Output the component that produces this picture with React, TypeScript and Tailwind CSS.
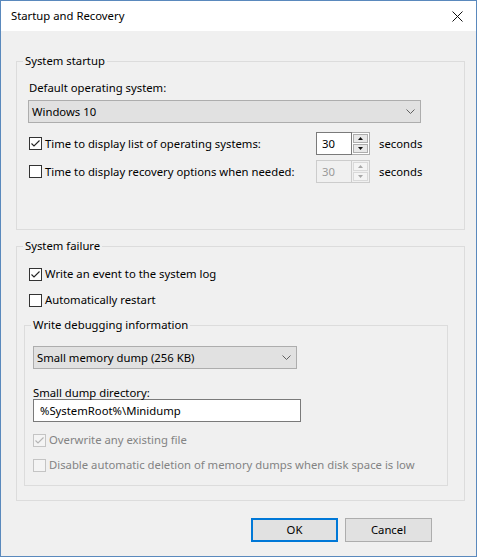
import React from 'react';

type CheckProps = { checked?: boolean; disabled?: boolean };

const Checkbox = ({ checked = false, disabled = false }: CheckProps) => (
  <div
    className={
      disabled
        ? 'w-[13px] h-[13px] shrink-0 border border-[#c4c4c4] bg-[#f4f4f4]'
        : 'w-[13px] h-[13px] shrink-0 border border-[#333333] bg-white'
    }
  >
    {checked && (
      <svg width="11" height="11" viewBox="0 0 11 11" className="block">
        <path
          d="M1.5 5.5 L4 8 L9.5 2.5"
          fill="none"
          stroke={disabled ? '#b4b4b4' : '#222222'}
          strokeWidth="1.1"
        />
      </svg>
    )}
  </div>
);

const Chevron = () => (
  <svg width="9" height="5" viewBox="0 0 9 5" className="block">
    <path d="M0.5 0.5 L4.5 4.5 L8.5 0.5" fill="none" stroke="#606060" strokeWidth="1" />
  </svg>
);

const Triangle = ({ up, color }: { up: boolean; color: string }) => (
  <svg width="5" height="3" viewBox="0 0 5 3" className="block">
    <polygon points={up ? '2.5,0 5,3 0,3' : '0,0 5,0 2.5,3'} fill={color} />
  </svg>
);

const SpinBox = ({ value, disabled = false }: { value: string; disabled?: boolean }) => (
  <div className="flex w-[54px] h-[23px] shrink-0">
    <div
      className={
        disabled
          ? 'w-[36px] h-full border border-[#cccccc] bg-[#f0f0f0] text-[#9a9a9a] pl-[5px] flex items-center'
          : 'w-[36px] h-full border border-[#7a7a7a] bg-white pl-[5px] flex items-center'
      }
    >
      {value}
    </div>
    <div
      className={
        disabled
          ? 'w-[18px] h-full border-y border-r border-[#cccccc] bg-[#f0f0f0] flex flex-col gap-[1px] p-[1px]'
          : 'w-[18px] h-full border-y border-r border-[#adadad] bg-white flex flex-col gap-[1px] p-[1px]'
      }
    >
      <div
        className={
          disabled
            ? 'flex-1 border border-[#d9d9d9] bg-[#f4f4f4] flex items-center justify-center'
            : 'flex-1 border border-[#adadad] bg-[#e8e8e8] flex items-center justify-center'
        }
      >
        <Triangle up color={disabled ? '#a8a8a8' : '#111111'} />
      </div>
      <div
        className={
          disabled
            ? 'flex-1 border border-[#d9d9d9] bg-[#f4f4f4] flex items-center justify-center'
            : 'flex-1 border border-[#adadad] bg-[#e8e8e8] flex items-center justify-center'
        }
      >
        <Triangle up={false} color={disabled ? '#a8a8a8' : '#111111'} />
      </div>
    </div>
  </div>
);

export default function App() {
  return (
    <div className="w-[480px] h-[560px] bg-white">
      <div className="w-[477px] h-[557px] border border-[#5a89bd] bg-[#f0f0f0] flex flex-col text-[11.3px] text-black font-['Noto_Sans',sans-serif] leading-[16px]">
        {/* Title bar */}
        <div className="h-[30px] bg-white flex items-center justify-between pl-[10px] shrink-0">
          <span>Startup and Recovery</span>
          <div className="w-[38px] h-[30px] flex items-center justify-center">
            <svg width="11" height="11" viewBox="0 0 11 11" className="block">
              <path d="M0.5 0.5 L10.5 10.5 M10.5 0.5 L0.5 10.5" stroke="#111111" strokeWidth="1" />
            </svg>
          </div>
        </div>

        {/* System startup */}
        <fieldset className="mt-[22px] ml-[15px] w-[449px] h-[177px] border border-[#dcdcdc] shrink-0">
          <legend className="ml-[6px] px-[2px] leading-[16px]">System startup</legend>
          <div className="pl-[11px] pt-[11px]">
            <div className="ml-[1px]">Default operating system:</div>
            <div className="mt-[4px] w-[393px] h-[23px] border border-[#adadad] bg-[#e1e1e1] flex items-center justify-between pl-[3px] pr-[5px]">
              <span>Windows 10</span>
              <Chevron />
            </div>
            <div className="mt-[9px] h-[23px] flex items-center">
              <div className="ml-[1px]">
                <Checkbox checked />
              </div>
              <div className="ml-[3px] w-[271px]">Time to display list of operating systems:</div>
              <SpinBox value="30" />
              <div className="ml-[9px]">seconds</div>
            </div>
            <div className="mt-[5px] h-[23px] flex items-center">
              <div className="ml-[1px]">
                <Checkbox />
              </div>
              <div className="ml-[3px] w-[271px]">Time to display recovery options when needed:</div>
              <SpinBox value="30" disabled />
              <div className="ml-[9px]">seconds</div>
            </div>
          </div>
        </fieldset>

        {/* System failure */}
        <fieldset className="mt-[8px] ml-[15px] w-[449px] h-[263px] border border-[#dcdcdc] shrink-0">
          <legend className="ml-[6px] px-[2px] leading-[16px]">System failure</legend>
          <div className="pt-[12px]">
            <div className="ml-[12px] flex items-center">
              <Checkbox checked />
              <span className="ml-[3px]">Write an event to the system log</span>
            </div>
            <div className="mt-[10px] ml-[12px] flex items-center">
              <Checkbox />
              <span className="ml-[3px]">Automatically restart</span>
            </div>

            <fieldset className="mt-[9px] ml-[7px] w-[424px] h-[169px] border border-[#dcdcdc]">
              <legend className="ml-[6px] px-[2px] leading-[16px]">Write debugging information</legend>
              <div className="pt-[13px] pl-[8px]">
                <div className="w-[264px] h-[23px] border border-[#adadad] bg-[#e1e1e1] flex items-center justify-between pl-[3px] pr-[5px]">
                  <span>Small memory dump (256 KB)</span>
                  <Chevron />
                </div>
                <div className="mt-[17px] leading-[13px]">Small dump directory:</div>
                <div className="w-[268px] h-[23px] border border-[#7a7a7a] bg-white flex items-center pl-[6px]">
                  %SystemRoot%\Minidump
                </div>
                <div className="mt-[10px] flex items-center text-[#838383]">
                  <Checkbox checked disabled />
                  <span className="ml-[3px]">Overwrite any existing file</span>
                </div>
                <div className="mt-[9px] flex items-center text-[#838383]">
                  <Checkbox disabled />
                  <span className="ml-[3px]">
                    Disable automatic deletion of memory dumps when disk space is low
                  </span>
                </div>
              </div>
            </fieldset>
          </div>
        </fieldset>

        {/* Buttons */}
        <div className="mt-[17px] flex justify-end gap-[7px] pr-[44px]">
          <button className="w-[87px] h-[24px] border-2 border-[#0078d7] bg-[#e1e1e1] flex items-center justify-center">
            OK
          </button>
          <button className="w-[87px] h-[24px] border border-[#adadad] bg-[#e1e1e1] flex items-center justify-center">
            Cancel
          </button>
        </div>
      </div>
    </div>
  );
}
